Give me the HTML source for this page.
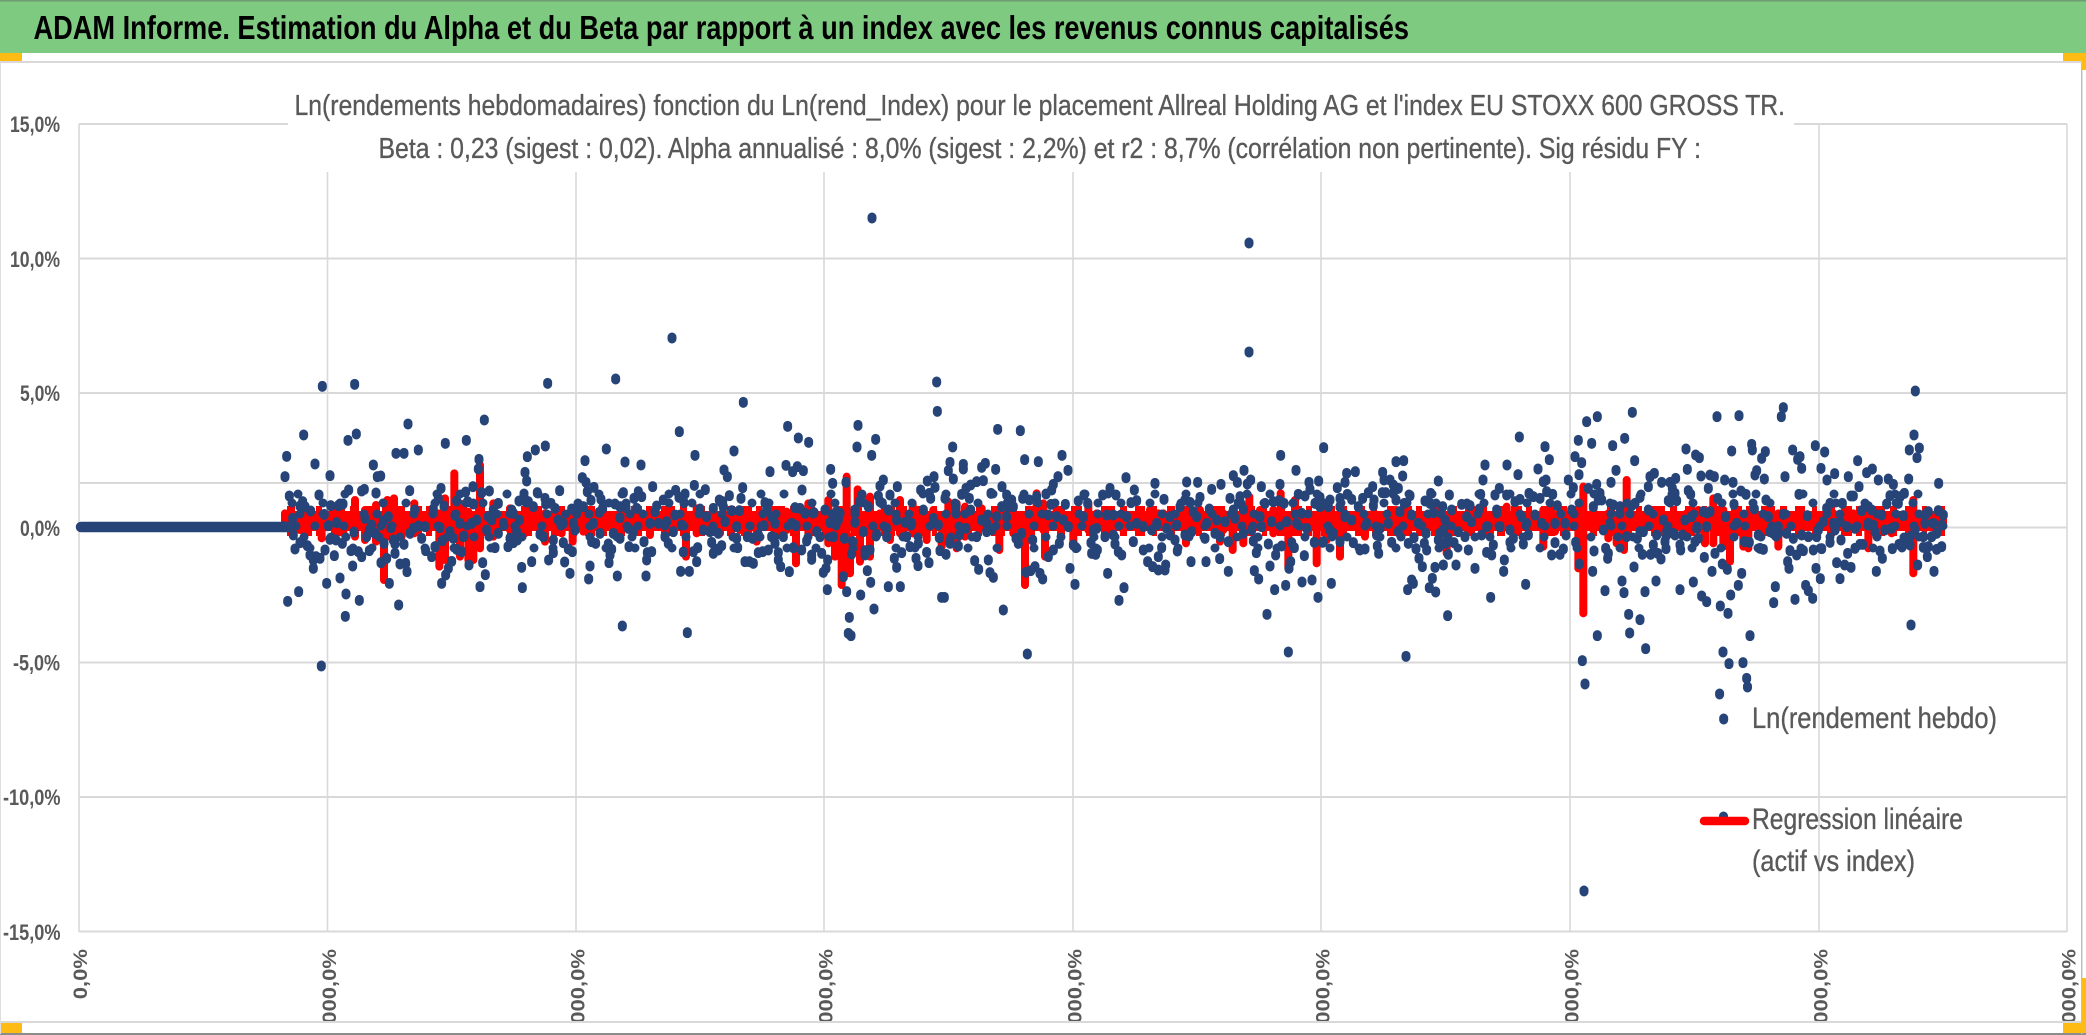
<!DOCTYPE html>
<html lang="fr"><head><meta charset="utf-8"><title>ADAM Informe</title>
<style>html,body{margin:0;padding:0;background:#fff;width:2086px;height:1035px;overflow:hidden}svg{display:block}text{font-family:"Liberation Sans",Arial,sans-serif}</style></head>
<body>
<svg xmlns="http://www.w3.org/2000/svg" width="2086" height="1035" viewBox="0 0 2086 1035">
<rect width="2086" height="1035" fill="#fff"/>
<!-- grid -->
<g stroke="#d9d9d9" fill="none">
<path stroke-width="2" d="M79 124H2067M79 258.5H2067M79 393H2067M79 483H2067M79 527.5H2067M79 662.5H2067M79 797H2067M79 931.5H2067"/>
<path stroke-width="1.6" d="M79 124V932M327.5 124V932M576 124V932M824 124V932M1073 124V932M1321 124V932M1570 124V932M1819 124V932M2067 124V932"/>
</g>
<!-- title box -->
<rect x="288" y="100" width="1506" height="72" fill="#fff"/>
<!-- regression line band -->
<rect x="285" y="511" width="1662" height="20" rx="6" fill="#f00"/>
<path d="M287 521H1945" fill="none" stroke="#f00" stroke-width="30" stroke-dasharray="8 6 11 4 6 9 14 5 7 8 10 7 5 10"/>
<g fill="none" stroke="#f00" stroke-width="24" stroke-linecap="round" transform="translate(280,360) scale(.33333)">
<path d="M15 460V490M60 480V510M125 470V535M190 465V520M225 420V530M255 450V540M288 435V545M312 490V660M322 420V530M342 415V520M365 460V530M403 430V520M430 465V500M478 460V620M495 415V600M523 340V520M540 430V590M565 455V600M580 510V600M600 315V565M640 430V530M690 445V510M735 450V520M795 460V545M845 460V520M878 480V545M910 450V515M980 470V500M1040 470V490M1110 460V525M1165 445V490M1218 470V590M1250 445V520M1300 460V500"/>
</g>
<g fill="none" stroke="#f00" stroke-width="24" stroke-linecap="round" transform="translate(720,360) scale(.33333)">
<path d="M0 480V520M60 450V510M110 465V545M165 455V530M200 455V510M228 490V610M265 430V520M325 420V550M345 460V590M365 530V675M380 350V640M390 530V640M413 388V490M420 510V605M450 410V590M480 460V500M510 450V540M540 420V520M578 430V520M620 480V540M640 450V480M665 520V560M685 425V540M710 430V565M735 440V530M785 445V500M838 490V570M880 490V520M915 510V675M950 400V490M970 430V510M975 510V590M1010 450V490M1060 490V560M1105 430V510M1130 460V500M1210 460V510M1290 450V500M1315 460V500"/>
</g>
<g fill="none" stroke="#f00" stroke-width="24" stroke-linecap="round" transform="translate(1160,360) scale(.33333)">
<path d="M10 460V500M60 440V490M78 450V550M120 450V500M180 480V545M190 460V510M218 510V570M250 440V550M268 410V490M300 450V490M340 450V520M362 400V490M385 500V625M405 420V500M470 480V610M500 460V540M540 470V590M615 490V530M640 460V490M710 450V500M780 465V500M860 470V580M925 480V515M990 480V520M1040 440V500M1080 460V490M1150 450V560M1185 480V515M1270 380V760M1255 480V625M1300 440V510"/>
</g>
<g fill="none" stroke="#f00" stroke-width="24" stroke-linecap="round" transform="translate(1560,360) scale(.33333)">
<path d="M145 460V535M170 480V550M192 490V570M200 360V450M250 470V500M340 460V490M380 460V500M415 450V510M435 490V550M460 415V550M490 450V560M510 510V605M550 470V560M565 480V565M615 450V500M655 460V560M720 470V510M770 465V500M820 460V500M880 460V500M925 490V565M995 480V520M1060 420V640M1140 465V500"/>
</g>
<!-- blue flat run -->
<path d="M81 527H288" stroke="#264478" stroke-width="10.5" stroke-linecap="round" fill="none"/>
<!-- dense cloud filler -->
<g fill="none" stroke="#264478" stroke-width="9" stroke-linecap="round">
<path stroke-dasharray="0 31 0 17 0 43 0 23 0 29" d="M292 503H1945"/>
<path stroke-dasharray="0 23 0 41 0 13 0 37 0 19" d="M300 514H1945"/>
<path stroke-dasharray="0 19 0 29 0 37 0 11 0 27" d="M296 526H1945"/>
<path stroke-dasharray="0 27 0 15 0 33 0 21 0 47" d="M304 537H1945"/>
<path stroke-dasharray="0 43 0 19 0 53 0 29 0 37" d="M310 548H1945"/>
<path stroke-dasharray="0 47 0 31 0 61 0 23" d="M298 494H1945"/>
</g>
<!-- blue dots -->
<g fill="none" stroke="#264478" stroke-width="27" stroke-linecap="round">
<path transform="translate(280,359) scale(.33333)" d="M127 79v6M224 73v6M803 70v6M1007 57v6M384 192v6M613 180v6M71 225v6M229 222v6M204 241v6M496 250v6M559 241v6M348 280v6M372 280v6M415 270v6M20 289v6M105 312v6M15 350v6M150 347v6M280 315v6M292 350v6M302 348v6M597 298v6M595 327v6M1198 215v6M979 267v6M1035 306v6M1083 315v6M1245 286v6M915 302v6M742 290v6M766 270v6M796 258v6M735 337v6M740 363v6M907 353v6M918 367v6M942 382v6M922 395v6M839 392v6M1118 380v6M1243 376v6M1276 389v6M1187 391v6M1215 402v6M1197 412v6M1212 428v6M1030 398v6M1075 395v6M1062 415v6M1085 410v6M28 408v6M117 405v6M206 390v6M245 393v6M253 388v6M288 399v6M389 392v6M483 385v6M557 396v6M579 380v6M605 398v6M628 393v6M475 415v6M492 438v6M563 425v6M580 432v6M530 423v6M68 425v6M60 438v6M75 440v6M92 453v6M152 437v6M175 437v6M189 432v6M460 447v6M404 450v6M717 423v6M732 402v6M772 398v6M745 425v6M760 440v6M795 415v6M797 432v6M813 430v6M825 445v6M655 430v6M640 450v6M695 450v6M963 418v6M933 421v6M968 445v6M958 457v6M1005 432v6M1020 440v6M1038 443v6M1070 445v6M1150 420v6M1130 438v6M1125 455v6M875 447v6M895 435v6M910 440v6M890 460v6M1260 447v6M1300 445v6M1318 420v6M10 500v6M38 475v6M40 525v6M133 463v6M145 497v6M170 488v6M150 538v6M168 540v6M222 516v6M255 475v6M268 510v6M275 495v6M260 530v6M285 520v6M310 483v6M325 470v6M333 503v6M340 540v6M390 520v6M400 505v6M415 498v6M435 500v6M425 535v6M480 503v6M510 515v6M520 535v6M525 466v6M540 490v6M550 530v6M575 490v6M590 480v6M625 470v6M635 480v6M620 510v6M655 520v6M670 490v6M700 460v6M718 480v6M710 515v6M690 535v6M835 480v6M850 490v6M880 490v6M885 510v6M940 490v6M960 520v6M1000 520v6M1020 473v6M1045 505v6M1060 515v6M1110 490v6M1135 490v6M1160 485v6M1185 465v6M1180 515v6M1205 495v6M1270 510v6M1290 515v6M1315 520v6M1280 470v6M780 523v6M790 530v6M45 567v6M60 548v6M82 557v6M135 570v6M90 585v6M100 600v6M120 595v6M108 590v6M100 625v6M163 587v6M187 550v6M213 572v6M235 575v6M245 590v6M268 572v6M218 618v6M312 550v6M303 608v6M320 595v6M345 552v6M372 553v6M345 580v6M360 612v6M377 610v6M381 635v6M437 572v6M455 590v6M465 560v6M487 542v6M530 568v6M545 575v6M552 528v6M515 604v6M505 625v6M497 645v6M567 615v6M608 608v6M616 644v6M645 563v6M684 560v6M700 548v6M712 540v6M725 622v6M755 605v6M820 540v6M850 548v6M865 567v6M877 575v6M820 578v6M806 600v6M854 606v6M870 640v6M935 545v6M947 550v6M985 552v6M995 568v6M990 585v6M987 608v6M930 618v6M926 657v6M1020 535v6M1047 560v6M1012 648v6M1092 545v6M1115 575v6M1102 578v6M1100 600v6M1098 648v6M1165 550v6M1155 530v6M1202 634v6M1228 634v6M1210 576v6M1240 575v6M1253 563v6M1250 605v6M1295 547v6M1300 580v6M1315 570v6M140 670v6M180 654v6M56 695v6M23 724v6M198 702v6M238 721v6M196 769v6M328 670v6M356 735v6M485 670v6M600 680v6M727 683v6M1027 798v6M1222 818v6M124 918v6"/>
<path transform="translate(720,359) scale(.33333)" d="M70 127v6M650 66v6M652 154v6M203 199v6M235 234v6M266 247v6M42 273v6M414 196v6M411 261v6M467 238v6M455 286v6M833 208v6M901 212v6M698 261v6M1026 286v6M914 299v6M955 305v6M690 307v6M685 332v6M730 313v6M730 327v6M785 322v6M796 310v6M827 328v6M1044 331v6M12 330v6M22 350v6M150 335v6M198 316v6M218 335v6M232 320v6M250 332v6M332 328v6M700 357v6M338 370v6M378 367v6M490 360v6M480 378v6M642 350v6M622 363v6M645 382v6M602 390v6M1014 350v6M1000 373v6M790 362v6M770 365v6M752 375v6M738 385v6M725 403v6M68 383v6M246 390v6M532 380v6M846 380v6M995 390v6M978 402v6M1218 353v6M1305 370v6M1243 390v6M1170 385v6M1188 405v6M1148 405v6M28 407v6M63 415v6M135 428v6M628 400v6M632 415v6M510 405v6M425 408v6M418 425v6M475 408v6M480 425v6M487 430v6M748 415v6M813 400v6M860 405v6M875 420v6M908 415v6M928 420v6M950 410v6M1092 405v6M1075 423v6M1103 430v6M1036 433v6M993 433v6M1233 428v6M1250 422v6M675 415v6M8 425v6M10 440v6M35 452v6M58 452v6M15 485v6M50 500v6M140 447v6M155 470v6M165 490v6M132 497v6M225 443v6M240 445v6M282 458v6M255 460v6M215 490v6M228 497v6M315 450v6M350 455v6M360 460v6M330 488v6M355 480v6M405 450v6M405 487v6M445 440v6M430 515v6M470 523v6M500 505v6M505 450v6M530 480v6M555 487v6M575 490v6M610 450v6M640 475v6M655 495v6M708 440v6M708 460v6M752 450v6M785 480v6M800 490v6M815 510v6M800 515v6M770 530v6M830 470v6M845 440v6M865 440v6M880 440v6M860 470v6M985 465v6M1010 470v6M1030 480v6M1045 500v6M1090 470v6M1130 505v6M1120 510v6M1160 465v6M1180 465v6M1220 470v6M1250 490v6M1270 500v6M1295 510v6M1310 490v6M1155 530v6M1180 525v6M738 505v6M718 525v6M690 545v6M5 557v6M50 535v6M53 563v6M82 530v6M98 535v6M115 525v6M155 530v6M190 530v6M165 550v6M145 570v6M128 575v6M115 578v6M175 578v6M175 600v6M182 620v6M208 635v6M75 605v6M88 605v6M100 610v6M260 543v6M245 570v6M220 563v6M275 585v6M275 598v6M290 515v6M300 530v6M305 580v6M323 600v6M318 625v6M310 637v6M340 530v6M373 535v6M398 545v6M395 582v6M370 650v6M322 689v6M380 695v6M422 705v6M450 570v6M435 572v6M435 585v6M442 632v6M452 667v6M462 747v6M388 772v6M385 820v6M393 827v6M500 530v6M523 595v6M530 622v6M545 578v6M505 680v6M541 680v6M570 560v6M560 530v6M595 550v6M588 595v6M594 617v6M627 608v6M620 577v6M658 533v6M660 572v6M678 583v6M690 550v6M715 558v6M665 712v6M673 712v6M764 602v6M776 628v6M805 600v6M810 638v6M820 652v6M850 750v6M888 535v6M905 520v6M895 550v6M938 540v6M918 637v6M932 632v6M945 620v6M960 640v6M968 657v6M922 882v6M985 590v6M1000 570v6M1018 550v6M1050 625v6M1060 555v6M1068 563v6M1065 673v6M1113 548v6M1115 580v6M1132 570v6M1127 583v6M1185 552v6M1195 575v6M1205 585v6M1163 640v6M1212 683v6M1197 721v6M1240 545v6M1270 570v6M1283 605v6M1298 620v6M1315 630v6M1315 590v6"/>
<path transform="translate(1160,359) scale(.33333)" d="M362 286v6M491 263v6M252 331v6M220 347v6M232 367v6M272 360v6M262 372v6M408 331v6M80 366v6M113 367v6M183 373v6M155 388v6M304 380v6M360 373v6M476 363v6M447 367v6M450 388v6M415 403v6M435 408v6M120 412v6M12 418v6M75 420v6M90 427v6M210 415v6M240 410v6M235 430v6M315 430v6M340 425v6M357 422v6M372 430v6M60 440v6M148 447v6M220 450v6M250 448v6M532 383v6M555 367v6M560 340v6M586 335v6M668 337v6M672 360v6M690 360v6M700 375v6M708 305v6M731 302v6M728 348v6M715 385v6M835 363v6M812 400v6M868 405v6M795 423v6M810 430v6M638 380v6M625 398v6M608 415v6M642 420v6M640 437v6M667 398v6M677 398v6M700 400v6M708 420v6M733 430v6M750 407v6M562 403v6M575 418v6M540 415v6M510 420v6M480 412v6M465 430v6M480 440v6M505 440v6M540 440v6M595 440v6M1078 231v6M1155 260v6M1168 299v6M1134 327v6M1074 344v6M1041 315v6M975 315v6M969 360v6M962 403v6M1005 405v6M1018 385v6M1040 405v6M1065 425v6M1080 418v6M1107 400v6M1120 410v6M1140 415v6M1160 395v6M1178 403v6M1158 360v6M1150 365v6M1255 241v6M1280 185v6M1312 170v6M1295 250v6M1245 290v6M1265 308v6M1257 344v6M1225 360v6M1240 383v6M1285 385v6M1310 373v6M848 440v6M875 450v6M905 433v6M930 437v6M958 447v6M1010 450v6M1192 437v6M1235 450v6M820 458v6M1300 440v6M1315 420v6M30 470v6M100 455v6M110 470v6M20 505v6M50 495v6M30 525v6M45 540v6M75 525v6M95 515v6M140 490v6M170 480v6M195 485v6M165 520v6M180 530v6M135 535v6M205 545v6M225 475v6M250 520v6M275 510v6M300 470v6M305 500v6M335 485v6M380 485v6M410 490v6M425 460v6M440 505v6M555 470v6M575 480v6M510 510v6M490 545v6M520 520v6M540 545v6M620 490v6M650 525v6M660 505v6M685 490v6M715 515v6M720 455v6M755 465v6M775 490v6M798 520v6M855 480v6M850 510v6M840 520v6M835 540v6M895 515v6M915 530v6M920 470v6M935 485v6M980 500v6M965 525v6M1020 500v6M1050 510v6M1060 535v6M1085 470v6M1100 490v6M1125 465v6M1145 490v6M1185 490v6M1215 490v6M1218 525v6M1105 525v6M1090 552v6M1050 547v6M5 563v6M52 573v6M93 605v6M17 615v6M15 630v6M138 605v6M179 596v6M205 634v6M280 543v6M325 552v6M289 578v6M347 585v6M365 558v6M395 548v6M403 563v6M392 605v6M387 625v6M330 618v6M283 632v6M296 657v6M344 689v6M377 676v6M321 763v6M385 876v6M433 587v6M463 547v6M426 666v6M456 660v6M514 670v6M474 712v6M488 547v6M580 548v6M600 570v6M615 567v6M652 558v6M656 580v6M695 547v6M745 550v6M762 533v6M768 566v6M777 595v6M787 620v6M793 550v6M800 570v6M825 622v6M850 615v6M817 655v6M808 683v6M827 696v6M755 660v6M760 670v6M743 689v6M738 889v6M857 550v6M882 548v6M865 583v6M888 615v6M863 767v6M925 570v6M945 625v6M992 712v6M980 577v6M995 585v6M1000 555v6M1033 600v6M1031 634v6M1097 673v6M1175 585v6M1185 548v6M1200 583v6M1210 567v6M1247 547v6M1258 612v6M1298 634v6M1302 573v6M1312 827v6M1267 902v6"/>
<path transform="translate(1560,359) scale(.33333)" d="M1066 93v6M217 157v6M471 170v6M537 167v6M670 143v6M664 170v6M194 235v6M158 257v6M224 302v6M168 331v6M153 367v6M265 380v6M270 350v6M283 340v6M305 367v6M330 367v6M347 355v6M337 385v6M378 267v6M407 285v6M418 293v6M382 328v6M423 348v6M450 345v6M463 350v6M445 385v6M385 392v6M392 403v6M325 422v6M350 422v6M345 400v6M240 412v6M225 430v6M215 437v6M180 440v6M160 435v6M180 460v6M120 400v6M125 420v6M515 273v6M575 253v6M577 270v6M616 275v6M605 295v6M590 332v6M585 345v6M613 357v6M494 360v6M519 367v6M543 393v6M558 403v6M473 415v6M618 420v6M522 433v6M583 447v6M675 350v6M698 270v6M720 290v6M713 298v6M725 325v6M766 257v6M794 276v6M783 325v6M824 341v6M801 360v6M865 350v6M893 302v6M937 327v6M920 338v6M955 360v6M985 357v6M1000 373v6M897 380v6M717 403v6M873 408v6M880 408v6M847 430v6M810 430v6M800 445v6M990 407v6M980 432v6M1020 410v6M1033 400v6M1015 430v6M1048 270v6M1062 225v6M1078 264v6M1071 293v6M1046 357v6M1136 370v6M905 452v6M925 440v6M935 450v6M265 450v6M430 455v6M450 455v6M670 463v6M742 467v6M965 465v6M1030 467v6M1105 455v6M1135 452v6M130 510v6M150 490v6M200 530v6M232 535v6M240 515v6M250 515v6M290 525v6M310 480v6M320 515v6M340 520v6M345 525v6M368 525v6M375 480v6M395 470v6M410 505v6M440 500v6M497 470v6M530 490v6M625 470v6M640 520v6M630 515v6M655 500v6M655 520v6M680 520v6M700 535v6M725 525v6M745 530v6M770 530v6M775 510v6M790 485v6M820 490v6M825 510v6M840 485v6M860 500v6M885 505v6M925 490v6M940 495v6M945 515v6M975 510v6M995 505v6M1025 550v6M1050 530v6M1065 510v6M1095 465v6M1095 490v6M1120 490v6M1150 465v6M1145 495v6M1130 520v6M1115 530v6M1090 530v6M137 565v6M145 580v6M143 595v6M247 583v6M272 583v6M293 580v6M303 597v6M222 621v6M186 663v6M288 663v6M135 692v6M192 698v6M255 695v6M206 763v6M240 779v6M209 819v6M257 866v6M280 555v6M315 545v6M318 566v6M362 570v6M360 555v6M405 545v6M415 535v6M433 592v6M465 580v6M456 634v6M400 666v6M360 689v6M425 708v6M440 725v6M481 738v6M504 760v6M487 612v6M502 628v6M545 640v6M535 676v6M512 705v6M570 827v6M489 876v6M507 911v6M549 908v6M560 955v6M553 545v6M568 547v6M595 525v6M600 565v6M610 568v6M690 572v6M710 585v6M730 572v6M760 570v6M785 566v6M683 605v6M687 625v6M646 680v6M641 728v6M705 718v6M737 676v6M745 692v6M758 715v6M768 625v6M781 656v6M810 547v6M843 540v6M863 580v6M885 565v6M900 553v6M908 553v6M830 608v6M854 615v6M873 622v6M840 656v6M960 573v6M967 595v6M949 634v6M997 566v6M1017 553v6M1035 545v6M1050 555v6M1090 562v6M1105 560v6M1130 568v6M1145 560v6M1102 590v6M1073 615v6M1122 634v6M1053 795v6"/>
<path stroke-width="9" d="M872 217v2M1249 242v2M1249 351v2M672 337v2M1585 683v2M1747.5 686v2M1719.6 693v2M1723.7 718v2M1584 890v2M1723.5 816v2"/>
</g>
<!-- title -->
<g fill="#595959" stroke="#595959" stroke-width=".35" font-size="29">
<text x="294.5" y="115" textLength="1490.5" lengthAdjust="spacingAndGlyphs">Ln(rendements hebdomadaires) fonction du Ln(rend_Index) pour le placement Allreal Holding AG et l'index EU STOXX 600 GROSS TR.</text>
<text x="378.5" y="158" textLength="1322.5" lengthAdjust="spacingAndGlyphs">Beta : 0,23 (sigest : 0,02). Alpha annualisé : 8,0% (sigest : 2,2%) et r2 : 8,7% (corrélation non pertinente). Sig résidu FY :</text>
</g>
<!-- y axis -->
<g fill="#595959" font-size="22.5" font-weight="700">
<text x="10" y="132" textLength="50" lengthAdjust="spacingAndGlyphs">15,0%</text>
<text x="10" y="267" textLength="50" lengthAdjust="spacingAndGlyphs">10,0%</text>
<text x="20" y="401" textLength="40" lengthAdjust="spacingAndGlyphs">5,0%</text>
<text x="20" y="536" textLength="40" lengthAdjust="spacingAndGlyphs">0,0%</text>
<text x="13" y="670.5" textLength="47" lengthAdjust="spacingAndGlyphs">-5,0%</text>
<text x="3" y="805" textLength="57.5" lengthAdjust="spacingAndGlyphs">-10,0%</text>
<text x="3" y="940" textLength="57.5" lengthAdjust="spacingAndGlyphs">-15,0%</text>
</g>
<!-- x axis -->
<g fill="#595959" font-size="19.5" font-weight="700" text-anchor="end">
<text transform="translate(87,949) rotate(-90) scale(1.13,1)">0,0%</text>
<text transform="translate(336,949) rotate(-90) scale(1.13,1)">1 000,0%</text>
<text transform="translate(584.5,949) rotate(-90) scale(1.13,1)">2 000,0%</text>
<text transform="translate(832.5,949) rotate(-90) scale(1.13,1)">3 000,0%</text>
<text transform="translate(1081.5,949) rotate(-90) scale(1.13,1)">4 000,0%</text>
<text transform="translate(1329.5,949) rotate(-90) scale(1.13,1)">5 000,0%</text>
<text transform="translate(1578.5,949) rotate(-90) scale(1.13,1)">6 000,0%</text>
<text transform="translate(1827.5,949) rotate(-90) scale(1.13,1)">7 000,0%</text>
<text transform="translate(2075.5,949) rotate(-90) scale(1.13,1)">8 000,0%</text>
</g>
<!-- legend -->
<path d="M1704 821H1745" stroke="#f00" stroke-width="8.5" stroke-linecap="round" fill="none"/>
<g fill="#595959" stroke="#595959" stroke-width=".35" font-size="30">
<text x="1752" y="728" textLength="245" lengthAdjust="spacingAndGlyphs">Ln(rendement hebdo)</text>
<text x="1752" y="829" textLength="211" lengthAdjust="spacingAndGlyphs">Regression linéaire</text>
<text x="1752" y="871" textLength="163" lengthAdjust="spacingAndGlyphs">(actif vs index)</text>
</g>
<!-- frame -->
<rect x="0" y="1022" width="2086" height="13" fill="#fff"/>
<rect x="0" y="1021" width="2082" height="2" fill="#d9d9d9"/>
<rect x="0" y="1033" width="2086" height="2" fill="#8c8c8c"/>
<rect x="0" y="53" width="2086" height="9" fill="#fff"/>
<rect x="0" y="61" width="2082" height="2" fill="#d9d9d9"/>
<rect x="0" y="62" width="1" height="972" fill="#dedede"/>
<rect x="2081" y="62" width="1.5" height="972" fill="#bfbfbf"/>
<!-- banner -->
<rect x="0" y="0" width="2086" height="53" fill="#7dca80"/>
<rect x="0" y="0" width="2086" height="1.5" fill="#6f9a72"/>
<text x="33.5" y="39" font-size="33" font-weight="700" fill="#000" textLength="1375.5" lengthAdjust="spacingAndGlyphs">ADAM Informe. Estimation du Alpha et du Beta par rapport à un index avec les revenus connus capitalisés</text>
<!-- handles -->
<g fill="#fdbb14">
<rect x="0" y="53" width="22" height="8"/>
<rect x="2063" y="53" width="23" height="8"/>
<rect x="2082" y="53" width="4" height="17"/>
<rect x="1" y="1023" width="21" height="10"/>
<rect x="2063" y="1023" width="22" height="10"/>
<rect x="2082" y="978" width="4" height="55"/>
</g>
</svg>
</body></html>
